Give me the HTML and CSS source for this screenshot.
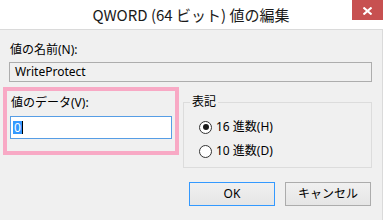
FILE: index.html
```html
<!DOCTYPE html>
<html lang="ja">
<head>
<meta charset="utf-8">
<title>QWORD (64 ビット) 値の編集</title>
<link rel="stylesheet" href="styles.css">
</head>
<body>
<div class="window">
  <div class="titlebar">
    <div class="title">QWORD (64 ビット) 値の編集</div>
    <div class="close">
      <svg width="9" height="8" viewBox="0 0 9 8"><path d="M0.5 0.5 L8.5 7.5 M8.5 0.5 L0.5 7.5" stroke="#fff" stroke-width="2" fill="none"/></svg>
    </div>
  </div>
  <div class="client">
    <div class="label">値の名前(N):</div>
    <div class="field readonly">WriteProtect</div>
    <div class="row">
      <div class="data-box">
        <div class="label">値のデータ(V):</div>
        <div class="field edit"><span class="sel">0</span><span class="caret"></span></div>
      </div>
      <fieldset class="group">
        <legend>表記</legend>
        <div class="radio"><span class="circle checked"></span><span>16 進数(H)</span></div>
        <div class="radio"><span class="circle"></span><span>10 進数(D)</span></div>
      </fieldset>
    </div>
    <div class="buttons">
      <div class="btn default">OK</div>
      <div class="btn">キャンセル</div>
    </div>
  </div>
</div>
</body>
</html>
```

FILE: styles.css
```css
html, body {
  margin: 0;
  padding: 0;
  background: #ffffff;
}
body {
  font-family: "Noto Sans", "Noto Sans CJK JP", sans-serif;
  font-size: 12px;
  line-height: 16px;
  color: #000;
  width: 388px;
  height: 220px;
  overflow: hidden;
}
.window {
  display: flex;
  flex-direction: column;
  height: 220px;
}
.titlebar {
  height: 29px;
  display: flex;
  align-items: flex-start;
  padding-left: 30px;
  background: #fff;
}
.title {
  flex: 1;
  text-align: center;
  font-family: "Noto Sans CJK JP", sans-serif;
  font-size: 15px;
  line-height: 29px;
  color: #1a1a1a;
  white-space: nowrap;
}
.close {
  width: 31px;
  height: 20px;
  margin-right: 5px;
  background: #c75050;
  display: flex;
  align-items: center;
  justify-content: center;
}
.close svg {
  margin-top: 1px;
}
.client {
  flex: 1;
  margin-right: 5px;
  background: #f0f0f0;
  border-top: 1px solid #dadada;
  border-right: 1px solid #dadada;
  padding: 12px 10px 0 9px;
}
.label {
  height: 16px;
  padding-left: 1px;
  white-space: nowrap;
}
.field {
  box-sizing: border-box;
  white-space: nowrap;
}
.readonly {
  margin-top: 4px;
  height: 20px;
  border: 1px solid #adadad;
  background: #f0f0f0;
  padding-left: 5px;
  line-height: 18px;
}
.row {
  display: flex;
  align-items: flex-start;
  margin-top: 5px;
  margin-left: -6px;
  gap: 4px;
}
.data-box {
  box-sizing: border-box;
  width: 176px;
  height: 68px;
  border: 4px solid #f8a9c5;
  padding: 4px 3px 0 3px;
}
.data-box .label {
  padding-left: 1px;
}
.edit {
  margin-top: 5px;
  height: 23px;
  border: 1px solid #569de5;
  background: #fff;
  padding-left: 2px;
  display: flex;
  align-items: center;
}
.sel {
  background: #3399ff;
  color: #fff;
  height: 13px;
  line-height: 13px;
  padding: 0 1px;
}
.caret {
  width: 1px;
  height: 13px;
  background: #000;
}
.group {
  flex: 1;
  margin: 7px 0 0 0;
  border: 1px solid #dcdcdc;
  padding: 5px 6px 4px 6px;
  min-width: 0;
}
.group legend {
  padding: 0 2px;
  line-height: 16px;
}
.radio {
  height: 24px;
  display: flex;
  align-items: center;
  padding-left: 9px;
  gap: 4px;
  white-space: nowrap;
}
.circle {
  box-sizing: border-box;
  width: 13px;
  height: 13px;
  border: 1px solid #333;
  border-radius: 50%;
  background: #fff;
  display: flex;
  align-items: center;
  justify-content: center;
}
.circle.checked::after {
  content: "";
  width: 6px;
  height: 6px;
  border-radius: 50%;
  background: #1a1a1a;
}
.buttons {
  display: flex;
  justify-content: flex-end;
  gap: 10px;
  margin-top: 14px;
  padding-right: 1px;
}
.btn {
  box-sizing: border-box;
  width: 86px;
  height: 24px;
  border: 1px solid #acacac;
  background: linear-gradient(#f0f0f0, #e5e5e5);
  display: flex;
  align-items: center;
  justify-content: center;
}
.btn.default {
  border-color: #3399ff;
}
```
